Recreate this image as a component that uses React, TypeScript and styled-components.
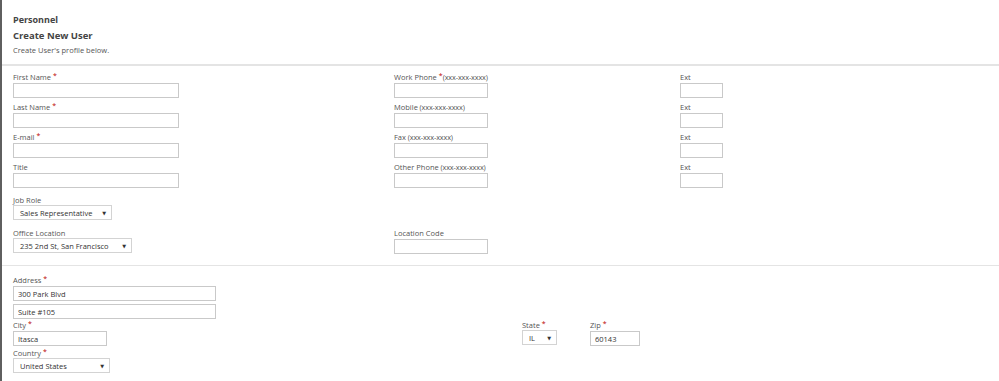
import React from "react"
import styled, { createGlobalStyle } from "styled-components"

const GlobalStyle = createGlobalStyle`
  html, body {
    margin: 0;
    padding: 0;
    background: #fff;
  }
  body {
    font-family: "Open Sans", "DejaVu Sans", sans-serif;
    color: #555;
  }
`

type FieldProps = {
  label: string,
  hint?: string,
  required?: boolean,
  children: React.ReactNode,
  gapTop?: number,
}

function Field({ label, hint, required, children, gapTop = 0 }: FieldProps) {
  return (
    <FieldWrap $gapTop={gapTop}>
      <Label>
        {label}
        {required && <Star>*</Star>}
        {hint && <Hint>{hint}</Hint>}
      </Label>
      {children}
    </FieldWrap>
  )
}

function Select({ value, width }: { value: string, width: number }) {
  return (
    <SelectBox $width={width}>
      <span>{value}</span>
      <Arrow>▼</Arrow>
    </SelectBox>
  )
}

export default function App(): JSX.Element {
  return (
    <Page>
      <GlobalStyle />
      <Header>
        <Crumb>Personnel</Crumb>
        <Heading>Create New User</Heading>
        <Sub>Create User's profile below.</Sub>
      </Header>

      <Section>
        <Grid>
          <Field label="First Name" required>
            <Input $width={166} />
          </Field>
          <Field label="Work Phone" required hint="(xxx-xxx-xxxx)">
            <Input $width={94} />
          </Field>
          <Field label="Ext">
            <Input $width={43} />
          </Field>

          <Field label="Last Name" required>
            <Input $width={166} />
          </Field>
          <Field label="Mobile" hint=" (xxx-xxx-xxxx)">
            <Input $width={94} />
          </Field>
          <Field label="Ext">
            <Input $width={43} />
          </Field>

          <Field label="E-mail" required>
            <Input $width={166} />
          </Field>
          <Field label="Fax" hint=" (xxx-xxx-xxxx)">
            <Input $width={94} />
          </Field>
          <Field label="Ext">
            <Input $width={43} />
          </Field>

          <Field label="Title">
            <Input $width={166} />
          </Field>
          <Field label="Other Phone" hint=" (xxx-xxx-xxxx)">
            <Input $width={94} />
          </Field>
          <Field label="Ext">
            <Input $width={43} />
          </Field>

          <Field label="Job Role" gapTop={3}>
            <Select value="Sales Representative" width={99} />
          </Field>
          <Empty />
          <Empty />

          <Field label="Office Location" gapTop={4}>
            <Select value="235 2nd St, San Francisco" width={119} />
          </Field>
          <Field label="Location Code" gapTop={4}>
            <Input $width={94} />
          </Field>
          <Empty />
        </Grid>
      </Section>

      <Section $top={9}>
        <Field label="Address" required>
          <Input $width={203} defaultValue="300 Park Blvd" />
        </Field>
        <Input $width={203} $mt={3} defaultValue="Suite #105" />
        <CityRow>
          <Field label="City" required>
            <Input $width={94} defaultValue="Itasca" />
          </Field>
          <Field label="State" required>
            <Select value="IL" width={35} />
          </Field>
          <Field label="Zip" required>
            <Input $width={50} defaultValue="60143" />
          </Field>
        </CityRow>
        <Field label="Country" required>
          <Select value="United States" width={97} />
        </Field>
      </Section>
    </Page>
  )
}

const Page = styled.div`
  border-left: 2px solid #5f5f5f;
  min-height: 381px;
  box-sizing: border-box;
`

const Header = styled.div`
  padding: 14px 0 8px 11px;
  border-bottom: 2px solid #e4e4e4;
`

const Crumb = styled.div`
  font-size: 9px;
  font-weight: 700;
  color: #444;
  line-height: 12px;
`

const Heading = styled.div`
  font-size: 9.5px;
  font-weight: 700;
  color: #444;
  line-height: 12px;
  margin-top: 4px;
`

const Sub = styled.div`
  font-size: 7.5px;
  color: #555;
  line-height: 11px;
  margin-top: 3px;
`

const Section = styled.div<{ $top?: number }>`
  padding: ${(p) => p.$top ?? 6}px 0 11px 11px;
  border-bottom: 1px solid #e4e4e4;
  &:last-child {
    border-bottom: none;
  }
`

const Grid = styled.div`
  display: grid;
  grid-template-columns: 381px 286px 1fr;
  row-gap: 4px;
`

const Empty = styled.div``

const FieldWrap = styled.div<{ $gapTop: number }>`
  display: flex;
  flex-direction: column;
  align-items: flex-start;
  margin-top: ${(p) => p.$gapTop}px;
`

const Label = styled.div`
  font-size: 7.5px;
  line-height: 11px;
  color: #555;
  white-space: nowrap;
`

const Star = styled.sup`
  color: #b00;
  font-size: 7px;
  margin-left: 2px;
  vertical-align: 0;
  position: relative;
  top: -2px;
`

const Hint = styled.span`
  font-size: 7.3px;
  letter-spacing: -0.15px;
`

const Input = styled.input<{ $width: number, $mt?: number }>`
  display: block;
  box-sizing: border-box;
  width: ${(p) => p.$width}px;
  height: 15px;
  margin: ${(p) => p.$mt ?? 0}px 0 0 0;
  padding: 0 4px;
  border: 1px solid #c9c9c9;
  background: #fff;
  font-family: "Open Sans", "DejaVu Sans", sans-serif;
  font-size: 7.5px;
  color: #333;
  outline: none;
`

const SelectBox = styled.div<{ $width: number }>`
  box-sizing: border-box;
  width: ${(p) => p.$width}px;
  height: 15px;
  margin-top: -1px;
  display: flex;
  align-items: center;
  justify-content: space-between;
  padding: 0 5px 0 6px;
  border: 1px solid #d3d3d3;
  font-size: 7.5px;
  color: #333;
  white-space: nowrap;
`

const Arrow = styled.span`
  font-size: 5px;
  color: #333;
`

const CityRow = styled.div`
  display: grid;
  grid-template-columns: 509px 68px 1fr;
  margin-top: 1px;
  margin-bottom: 2px;
`
